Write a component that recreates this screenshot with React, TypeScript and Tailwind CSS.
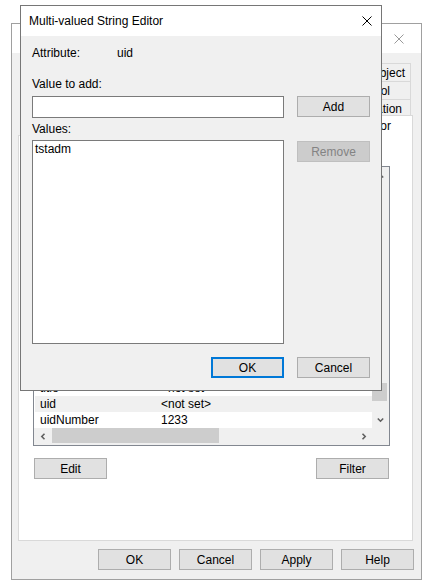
import React from "react";

type BtnProps = { label: string; className?: string; disabled?: boolean; focused?: boolean };

const Btn = ({ label, className = "", disabled = false, focused = false }: BtnProps) => (
  <div
    className={`flex h-[21px] w-[73px] shrink-0 items-center justify-center ${
      disabled
        ? "border border-[#bfbfbf] bg-[#cccccc] text-[#838383]"
        : focused
        ? "border-2 border-[#0078d7] bg-[#e1e1e1]"
        : "border border-[#adadad] bg-[#e1e1e1]"
    } ${className}`}
  >
    {label}
  </div>
);

const CloseX = ({ color }: { color: string }) => (
  <svg width="10" height="10" viewBox="0 0 10 10" className="shrink-0">
    <path d="M0.5 0.5L9.5 9.5M9.5 0.5L0.5 9.5" stroke={color} strokeWidth="1" fill="none" />
  </svg>
);

const Chev = ({ dir }: { dir: "up" | "down" | "left" | "right" }) => {
  const vertical = dir === "up" || dir === "down";
  const pts = {
    up: "0.8,4.5 3.5,1.8 6.2,4.5",
    down: "0.8,1.5 3.5,4.2 6.2,1.5",
    left: "4.5,0.8 1.8,3.5 4.5,6.2",
    right: "1.5,0.8 4.2,3.5 1.5,6.2",
  }[dir];
  return (
    <svg width={vertical ? 7 : 6} height={vertical ? 6 : 7} viewBox={vertical ? "0 0 7 6" : "0 0 6 7"}>
      <polyline points={pts} stroke="#606060" strokeWidth="1.6" fill="none" />
    </svg>
  );
};

/* tabs hidden behind the modal: drawn as empty tab shapes */
const Tab = () => <div className="flex-1 border-l border-t border-[#d9d9d9] bg-[#f0f0f0]" />;

const rows: { name: string; value: string; hl?: boolean }[] = [
  { name: "title", value: "<not set>" },
  { name: "uid", value: "<not set>", hl: true },
  { name: "uidNumber", value: "1233" },
];

export default function App() {
  return (
    <div className="relative h-[587px] w-[434px] overflow-hidden bg-white font-['Liberation_Sans',Arial,sans-serif] text-[12px] leading-[16px] text-black">
      {/* Background properties window */}
      <div className="absolute left-[11px] top-[23px] z-0 flex h-[557px] w-[411px] flex-col border border-[#a0a0a0] bg-[#f0f0f0]">
        <div className="flex h-[29px] shrink-0 items-center justify-end bg-white pr-[17px]">
          <CloseX color="#999999" />
        </div>

        <div className="ml-[6px] mt-[10px] flex w-[395px] flex-col">
          {/* tab rows */}
          <div className="ml-[6px] flex h-[18px] w-[387px]">
            <Tab />
            <Tab />
            <Tab />
            <div className="flex w-[62px] items-center justify-end border-x border-t border-[#d9d9d9] bg-[#f0f0f0] pr-[5px]">
              Object
            </div>
          </div>
          <div className="ml-[4px] flex h-[18px] w-[389px]">
            <Tab />
            <Tab />
            <Tab />
            <div className="flex w-[120px] items-center justify-end border-x border-t border-[#d9d9d9] bg-[#f0f0f0] pr-[20px]">
              Remote control
            </div>
          </div>
          <div className="ml-[3px] flex h-[18px] w-[390px]">
            <Tab />
            <Tab />
            <Tab />
            <Tab />
            <div className="flex w-[84px] items-center justify-end border-x border-t border-[#d9d9d9] bg-[#f0f0f0] pr-[8px]">
              Organization
            </div>
          </div>
          <div className="relative z-10 ml-[3px] flex h-[18px] w-[392px] items-end">
            <Tab />
            <Tab />
            <div className="-mb-[1px] flex h-[21px] w-[120px] items-center justify-end border-x border-t border-[#d9d9d9] bg-white pr-[21px]">
              Attribute Editor
            </div>
          </div>

          {/* tab panel */}
          <div className="flex h-[406px] w-[395px] flex-col border border-[#d9d9d9] bg-white">
            <div className="ml-[14px] flex w-[357px] flex-col">
              <div className="mt-[30px] flex h-[280px] flex-col border border-[#828790] bg-white">
                <div className="flex min-h-0 flex-1">
                  <div className="flex w-[338px] flex-col justify-end overflow-hidden pl-[1px]">
                    {rows.map((r) => (
                      <div
                        key={r.name}
                        className={`flex h-[16px] shrink-0 items-center whitespace-nowrap ${r.hl ? "bg-[#f0f0f0]" : ""}`}
                      >
                        <div className="w-[126px] pl-[5px]">{r.name}</div>
                        <div>{r.value}</div>
                      </div>
                    ))}
                  </div>
                  <div className="flex w-[17px] flex-col bg-[#f0f0f0]">
                    <div className="flex h-[17px] items-center justify-center">
                      <Chev dir="up" />
                    </div>
                    <div className="h-[199px]" />
                    <div className="h-[18px] w-[15px] bg-[#cdcdcd]" />
                    <div className="flex-1" />
                    <div className="flex h-[17px] items-center justify-center">
                      <Chev dir="down" />
                    </div>
                  </div>
                </div>
                <div className="flex h-[17px] shrink-0">
                  <div className="flex w-[338px] bg-[#f0f0f0]">
                    <div className="flex w-[17px] items-center justify-center">
                      <Chev dir="left" />
                    </div>
                    <div className="ml-[1px] h-[15px] w-[167px] bg-[#cdcdcd]" />
                    <div className="flex-1" />
                    <div className="flex w-[17px] items-center justify-center">
                      <Chev dir="right" />
                    </div>
                  </div>
                  <div className="w-[17px] bg-[#f0f0f0]" />
                </div>
              </div>
              <div className="mt-[12px] flex justify-between px-[1px]">
                <Btn label="Edit" />
                <Btn label="Filter" />
              </div>
            </div>
          </div>
        </div>

        <div className="mt-[8px] flex justify-end gap-[8px] pr-[7px]">
          <Btn label="OK" />
          <Btn label="Cancel" />
          <Btn label="Apply" />
          <Btn label="Help" />
        </div>
      </div>

      {/* Foreground modal dialog */}
      <div className="absolute left-[20px] top-[5px] z-20 flex h-[386px] w-[362px] flex-col border border-[#767676] bg-[#f0f0f0]">
        <div className="flex h-[30px] shrink-0 items-center justify-between bg-white pl-[8px] pr-[9px]">
          <span>Multi-valued String Editor</span>
          <CloseX color="#000000" />
        </div>
        <div className="flex flex-col px-[11px]">
          <div className="mt-[9px] flex h-[16px] items-center">
            <span className="w-[85px]">Attribute:</span>
            <span>uid</span>
          </div>
          <div className="mt-[15px] h-[16px]">Value to add:</div>
          <div className="mt-[4px] flex items-start justify-between">
            <div className="h-[22px] w-[252px] border border-[#7a7a7a] bg-white" />
            <Btn label="Add" />
          </div>
          <div className="mt-[3px] h-[16px]">Values:</div>
          <div className="mt-[3px] flex items-start justify-between">
            <div className="h-[204px] w-[252px] border border-[#7a7a7a] bg-white pl-[2px]">tstadm</div>
            <Btn label="Remove" disabled className="mt-[1px]" />
          </div>
          <div className="mt-[13px] flex justify-end gap-[13px]">
            <Btn label="OK" focused />
            <Btn label="Cancel" />
          </div>
        </div>
      </div>
    </div>
  );
}
